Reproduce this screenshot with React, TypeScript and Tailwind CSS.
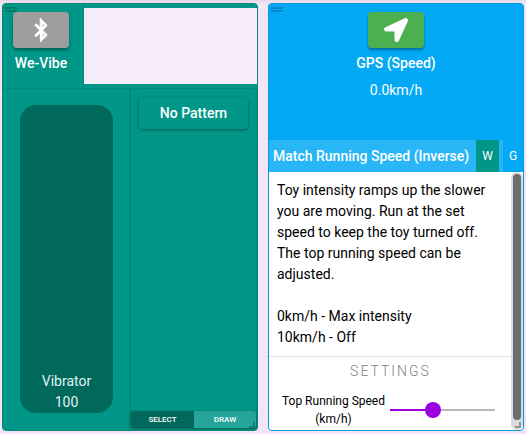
import React from "react";
import { FaBluetoothB, FaLocationArrow } from "react-icons/fa";

function Grip({ className }: { className: string }) {
  return (
    <div className={`absolute left-[2px] top-[3px] flex h-[5px] w-3 flex-col justify-between ${className}`}>
      <div className="h-[2px] bg-current" />
      <div className="h-[2px] bg-current" />
    </div>
  );
}

function Resize({ className }: { className: string }) {
  return <div className={`absolute h-[6px] w-[6px] border-b-2 border-r-2 ${className}`} />;
}

function ToyCard() {
  return (
    <section className="relative flex h-[428px] w-64 flex-col overflow-hidden rounded-[4px] border border-[#00897b] bg-[#009688] text-white">
      <Grip className="text-[#00796b]" />
      <header className="flex h-[84px] shrink-0">
        <div className="flex w-[81px] shrink-0 flex-col items-center border-r border-[#00897b] pr-[4px] pt-2">
          <button className="flex h-9 w-14 items-center justify-center rounded-[4px] bg-[#9e9e9e] shadow-[0_2px_3px_rgba(0,0,0,0.35)]">
            <FaBluetoothB className="h-6 w-6 stroke-white stroke-[20]" />
          </button>
          <span className="mt-[5px] text-sm font-medium leading-[21px]">We-Vibe</span>
        </div>
        <div className="mt-1 h-[76px] flex-1 bg-[#f6ebf9]" />
      </header>
      <div className="flex flex-1 border-t border-[#00897b]">
        <div className="flex w-[128px] shrink-0 justify-center border-r-2 border-[#00897b] pt-4">
          <div className="ml-px flex h-[308px] w-[93px] flex-col items-center justify-end rounded-2xl bg-[#00695c] text-sm leading-[21px] text-[#e0f2f1]">
            <span>Vibrator</span>
            <span>100</span>
          </div>
        </div>
        <div className="flex min-w-0 flex-1 flex-col border-r border-[#00897b]">
          <button className="ml-2 mt-2 h-8 w-[109px] rounded-[4px] bg-[#009688] text-sm font-medium shadow-[0_1px_3px_rgba(0,0,0,0.4)]">No Pattern</button>
          <div className="mb-[2px] mt-auto flex h-[17px] overflow-hidden rounded-[3px] text-[8px] font-medium leading-[17px] shadow-[0_1px_3px_rgba(0,0,0,0.4)]">
            <button className="w-[63px] bg-[#00695c]">SELECT</button>
            <button className="flex-1 bg-[#26a69a]">DRAW</button>
          </div>
        </div>
      </div>
      <Resize className="bottom-[2px] right-[2px] border-[#1b7a71]" />
    </section>
  );
}

function GpsCard() {
  return (
    <section className="relative flex h-[428px] w-64 flex-col overflow-hidden rounded-[4px] border border-[#0299dd] bg-[#03a9f4] text-white">
      <Grip className="text-[#0288d1]" />
      <header className="flex h-[136px] shrink-0 flex-col items-center pt-2 text-sm leading-[21px]">
        <button className="flex h-9 w-14 items-center justify-center rounded-[4px] bg-[#4caf50] shadow-[0_2px_3px_rgba(0,0,0,0.35)]">
          <FaLocationArrow className="h-6 w-6" />
        </button>
        <span className="mt-[5px] font-medium">GPS (Speed)</span>
        <span className="mt-[6px]">0.0km/h</span>
      </header>
      <nav className="flex h-8 shrink-0 items-stretch bg-[#29b6f6]">
        <span className="w-[207px] whitespace-nowrap pl-1 text-sm font-medium leading-8">Match Running Speed (Inverse)</span>
        <button className="w-[23px] bg-[#009688] text-xs">W</button>
        <button className="ml-1 flex-1 bg-[#03a9f4] text-xs">G</button>
      </nav>
      <div className="flex flex-1 bg-white text-black">
        <div className="w-[242px] shrink-0">
          <p className="h-[184px] whitespace-pre-line pl-2 pt-2 text-sm leading-[21px]">
            {"Toy intensity ramps up the slower\nyou are moving. Run at the set\nspeed to keep the toy turned off.\nThe top running speed can be\nadjusted.\n\n0km/h - Max intensity\n10km/h - Off"}
          </p>
          <div className="border-t border-[#e0e0e0] pl-[1px] pt-[4px] text-center text-sm font-light leading-[21px] tracking-[2px] text-[#808080]">SETTINGS</div>
          <div className="mt-[10px] flex items-center">
            <span className="ml-3 w-[105px] text-center text-xs leading-[18px]">Top Running Speed (km/h)</span>
            <div className="relative ml-1 flex h-4 w-[105px] items-center">
              <div className="h-[2px] w-[43px] bg-[#9c00e0]" />
              <div className="h-[2px] flex-1 bg-[#b8b8b8]" />
              <div className="absolute left-[35px] top-0 h-4 w-4 rounded-full bg-[#9c00e0]" />
            </div>
          </div>
        </div>
        <div className="w-3 rounded-full bg-[#dcdcdc] px-[2px] pt-[2px]">
          <div className="h-[246px] rounded-full bg-[#6d6d6d]" />
        </div>
      </div>
      <Resize className="bottom-[2px] right-[2px] border-[#999]" />
    </section>
  );
}

export default function App() {
  return (
    <main className="h-[434px] w-[526px] overflow-hidden bg-[#f3e5f5] font-['Roboto',sans-serif]">
      <div className="flex gap-[10px] bg-[linear-gradient(#e6d8e8,#f3e5f5_4px)] pl-[2px] pt-[3px]">
        <ToyCard />
        <GpsCard />
      </div>
    </main>
  );
}
